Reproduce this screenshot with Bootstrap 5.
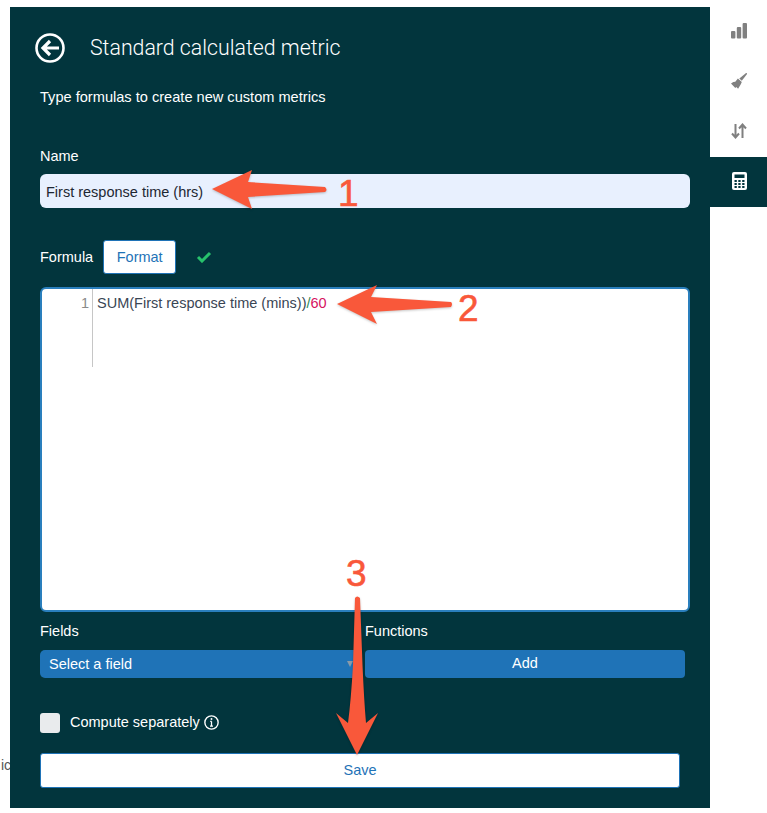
<!DOCTYPE html>
<html lang="en">
<head>
<meta charset="utf-8">
<title>Standard calculated metric</title>
<link href="https://cdn.jsdelivr.net/npm/bootstrap@5.3.0/dist/css/bootstrap.min.css" rel="stylesheet">
<style>
html,body{height:100%;}
body{font-family:"Liberation Sans",Arial,sans-serif;background:#fff;overflow:hidden;position:relative;font-size:14.5px;}
.stage{height:813px;padding:7px 0 5px 10px;}
.stray{position:absolute;left:1px;top:756px;color:#555;font-size:14px;line-height:18px;}
.panel{width:700px;height:801px;background:#02353d;color:#fff;padding:26px 20px 0 30px;flex:none;position:relative;}
.head{height:30px;margin-left:-5px;}
.head svg{display:block;}
.ttl{font-family:Roboto,"Liberation Sans",sans-serif;font-size:21.3px;font-weight:300;line-height:30px;margin-left:25px;}
.sub{font-size:14.6px;line-height:18px;margin-top:25px;}
.lbl{font-size:14.5px;line-height:18px;}
.name-lbl{margin-top:41px;margin-bottom:9px;}
.name-in.form-control{height:34px;background:#e8f0fe;border:0;border-radius:6px;padding:2px 6px 0;font-size:14.5px;color:#1d2733;}
.frow{margin-top:32px;height:34px;}
.fmt.btn{width:73px;height:34px;background:#fff;color:#1f73b7;border:1px solid #1f73b7;border-radius:3px;padding:1px 0 0 0;font-size:14.5px;margin-left:10px;}
.chk{margin-left:20px;}
.editor{height:325px;margin-top:13px;background:#fff;border:2px solid #2a7fbd;border-radius:6px;color:#3a4654;font-size:14.5px;line-height:18px;}
.gutter{width:51px;height:78px;border-right:1px solid #c6c6c6;color:#8a8a8a;text-align:right;padding:5px 3px 0 0;flex:none;}
.code{padding:5px 0 0 4px;}
.op{color:#2e8b57;}
.num{color:#d6135f;}
.two{margin-top:10px;gap:5px;}
.colw{width:320px;}
.sel.form-select{height:28px;background-color:#1f73b7;background-image:none;color:#fff;border:0;border-radius:5px;padding:2px 9px 0;font-size:14.5px;}
.selwrap{position:relative;margin-top:10px;}
.caret{position:absolute;right:7px;top:11px;width:0;height:0;border-left:3.5px solid transparent;border-right:3.5px solid transparent;border-top:6px solid #8a9aa8;}
.addb.btn{height:28px;width:320px;background:#1f73b7;color:#fff;border:0;border-radius:4px;padding:0 0 1px;font-size:14.5px;margin-top:10px;}
.cmp{margin-top:35px;height:20px;}
.cbx{width:20px;height:20px;background:#e9ebed;border-radius:3px;flex:none;}
.cmp-t{margin-left:10px;font-size:14.5px;}
.cmp svg{margin-left:4px;margin-top:-2px;}
.savb.btn{display:block;width:640px;height:35px;margin-top:20px;background:#fff;color:#1f73b7;border:1px solid #1f73b7;border-radius:3px;padding:0;font-size:14.5px;}
.rail{width:57px;flex:none;}
.tabi{height:50px;display:flex;align-items:center;justify-content:center;color:#808080;padding:0 0 3px 1px;}
.tabi.on{background:#02353d;color:#fff;}
.notes{position:absolute;left:0;top:0;pointer-events:none;filter:drop-shadow(0 1px 1px rgba(0,0,0,.22));}
.dig{position:absolute;color:#f9583a;font-size:37px;line-height:37px;-webkit-text-stroke:.6px #f9583a;}
.d1{left:338px;top:175px;}
.d2{left:458px;top:290px;}
.d3{left:346px;top:555px;}
</style>
</head>
<body>
<div class="stray">ic</div>
<div class="stage d-flex">
  <div class="panel">
    <div class="head d-flex align-items-center">
      <svg width="30" height="30" viewBox="0 0 30 30" fill="none" stroke="#fff"><circle cx="15" cy="15" r="13.5" stroke-width="2.6"/><path d="M24 15H9M15 8l-7 7 7 7" stroke-width="3.2"/></svg>
      <div class="ttl">Standard calculated metric</div>
    </div>
    <div class="sub">Type formulas to create new custom metrics</div>
    <div class="lbl name-lbl">Name</div>
    <input class="form-control name-in" value="First response time (hrs)">
    <div class="frow d-flex align-items-center">
      <span class="lbl">Formula</span>
      <button class="btn fmt" type="button">Format</button>
      <svg class="chk" width="16" height="12" viewBox="0 0 16 12" fill="none" stroke="#27c26c" stroke-width="3"><path d="M2 6l4 4 8-8"/></svg>
    </div>
    <div class="editor d-flex">
      <div class="gutter">1</div>
      <div class="code">SUM(First response time (mins))<span class="op">/</span><span class="num">60</span></div>
    </div>
    <div class="d-flex two">
      <div class="colw">
        <div class="lbl">Fields</div>
        <div class="selwrap">
          <select class="form-select sel"><option>Select a field</option></select>
          <span class="caret"></span>
        </div>
      </div>
      <div class="colw">
        <div class="lbl">Functions</div>
        <button class="btn addb" type="button">Add</button>
      </div>
    </div>
    <div class="cmp d-flex align-items-center">
      <span class="cbx"></span>
      <span class="cmp-t">Compute separately</span>
      <svg width="15" height="15" viewBox="0 0 14 14" fill="none" stroke="#fff"><circle cx="7" cy="7" r="6.2" stroke-width="1.3"/><path d="M7 6v4.200M5.600 10.400h2.800M5.800 6h1.400" stroke-width="1.200"/><circle cx="7" cy="3.800" r=".9" fill="#fff" stroke="none"/></svg>
    </div>
    <button class="btn savb" type="button">Save</button>
  </div>
  <div class="rail">
    <div class="tabi">
      <svg width="16" height="16" viewBox="0 0 16 16" fill="currentColor"><rect x="0" y="8" width="4.400" height="7.500" rx="1"/><rect x="5.800" y="4" width="4.400" height="11.500" rx="1"/><rect x="11.600" y="0" width="4.400" height="15.500" rx="1"/></svg>
    </div>
    <div class="tabi">
      <svg width="16" height="16" viewBox="0 0 16 16" fill="currentColor"><path d="M15.800.2c.3.300.2.800-.1 1.200L10.800 7.700 8.300 5.400 14.500.4c.4-.3 1-.5 1.300-.2z"/><path d="M6.900 5.500l3.900 3.500-1 2.300-2.700 4.400-1.800-1.600-1 .9L0 10.500l2.300-1.600 2-.2z"/></svg>
    </div>
    <div class="tabi">
      <svg width="16" height="16" viewBox="0 0 16 16" fill="none" stroke="currentColor" stroke-width="2"><path d="M4.500 1v13M1 10.500l3.500 4 3.500-4"/><path d="M11.500 15V2M8 5.500l3.500-4 3.500 4"/></svg>
    </div>
    <div class="tabi on">
      <svg width="15" height="18" viewBox="0 0 15 18"><rect width="15" height="18" rx="2" fill="#fff"/><g fill="#02353d"><rect x="2.500" y="2.500" width="10" height="3.500"/><rect x="2.500" y="8" width="2.300" height="2"/><rect x="6.300" y="8" width="2.300" height="2"/><rect x="10.200" y="8" width="2.300" height="2"/><rect x="2.500" y="11" width="2.300" height="2"/><rect x="6.300" y="11" width="2.300" height="2"/><rect x="10.200" y="11" width="2.300" height="2"/><rect x="2.500" y="14" width="2.300" height="2"/><rect x="6.300" y="14" width="2.300" height="2"/><rect x="10.200" y="14" width="2.300" height="2"/></g></svg>
    </div>
  </div>
</div>
<svg class="notes" width="767" height="813" viewBox="0 0 767 813" fill="#f9583a">
  <path d="M212 189 252 170 248 182 325 187Q328 190 325 192L248 197 252 209Z"/>
  <path d="M337 304 377 285 371 297 451 302Q453 304 451 307L371 312 377 324Z"/>
  <path d="M355 598Q357 595 360 598L362.500 665Q364 700 366 723L378 713 357 755 336 713 348 723Q351 700 353 665Z"/>
</svg>
<span class="dig d1">1</span>
<span class="dig d2">2</span>
<span class="dig d3">3</span>
</body>
</html>
